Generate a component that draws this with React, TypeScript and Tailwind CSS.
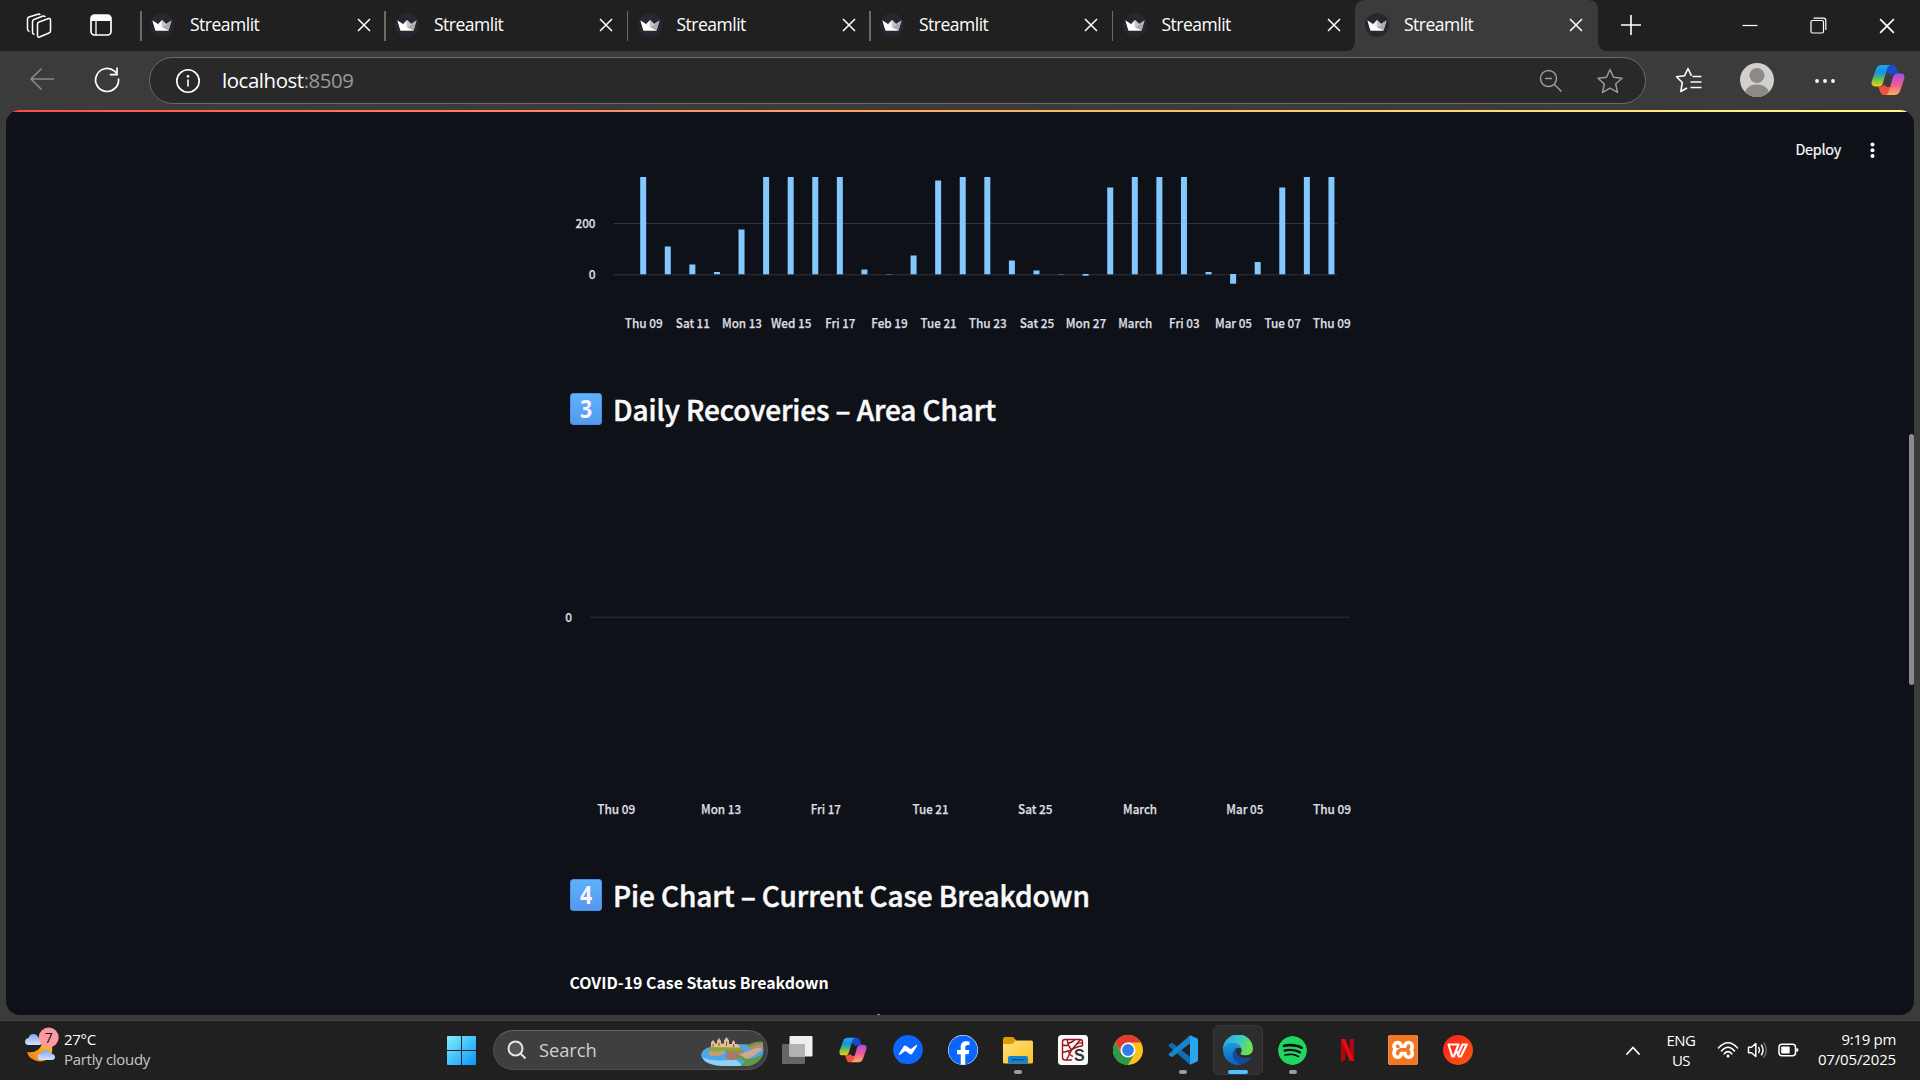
import React from "react";
import { BsMessenger } from "react-icons/bs";
import { FaFacebook } from "react-icons/fa";
import { SiSpotify, SiXampp } from "react-icons/si";

const ui = "font-['Open_Sans','Noto_Sans',sans-serif]";
const src = "font-['Noto_Sans_CJK_SC',sans-serif]";

function Crown() {
  return (
    <svg width="26" height="26" viewBox="0 0 26 26" className="shrink-0">
      <circle cx="13" cy="13" r="12" fill="#262730" />
      <path d="M3.500 8.500 L9 12 L13 8 L17 12 L22.500 8.500 L19.500 18.500 H6.500 Z" fill="#f0f0f0" />
      <path d="M13 8 L17 12 L13 15.500 Z" fill="#c4c4c4" />
      <path d="M22.500 8.500 L19.500 18.500 L13 15.500 Z" fill="#ababab" />
      <path d="M3.500 8.500 L13 15.500 L19.500 18.500 H6.500 Z" fill="#ffffff" />
    </svg>
  );
}

function Cross({ size }: { size: number }) {
  return (
    <svg width={size} height={size} viewBox="0 0 14 14" className="shrink-0" fill="none" stroke="#fff" strokeWidth="1.5">
      <path d="M1 1 L13 13 M13 1 L1 13" />
    </svg>
  );
}

function Tab({ active, first }: { active?: boolean; first?: boolean }) {
  return (
    <div className={`relative flex h-[50px] shrink-0 items-center ${first ? "w-[244px]" : "w-[242.5px]"}`}>
      {active ? (
        <svg className="absolute -left-[8px] top-0" width="262" height="51" viewBox="0 0 262 51">
          <path d="M0 51 Q9 51 9 41 V10 Q9 0 19 0 H242 Q252 0 252 10 V41 Q252 51 262 51 Z" fill="#3b3b3b" />
        </svg>
      ) : (
        <div className="absolute left-0 top-[11px] h-[30px] w-[1.5px] bg-[#6a6a6a]" />
      )}
      <div className={`relative flex w-full items-center ${first ? "pl-[9px]" : "pl-[10px]"}`}>
        <Crown />
        <span
          className={`${ui} -mt-[2px] text-[17.5px] leading-[24px] tracking-[-0.5px] text-white ${
            first ? "ml-[15px] w-[167px]" : "ml-[14px] w-[165px]"
          }`}
        >
          Streamlit
        </span>
        <Cross size={14} />
      </div>
    </div>
  );
}

function TabBar() {
  return (
    <div className="flex h-[51px] items-center bg-[#202020]">
      <svg className="ml-[26px] shrink-0" width="26" height="26" viewBox="0 0 26 26" fill="none" stroke="#fff" strokeWidth="1.5" strokeLinejoin="round">
        <path d="M11.500 11 Q11.500 9.500 13 9 L22.500 5.500 Q24.500 5 24.500 7 V18 Q24.500 19.500 23 20 L13.500 24 Q11.500 24.700 11.500 22.500 Z" />
        <path d="M8.500 21.500 Q6.500 21 6.500 19.500 V8.500 Q6.500 7 8 6.500 L17 3 Q18.800 2.600 19.300 4" />
        <path d="M3.500 18.500 Q1.500 18 1.500 16 V6 Q1.500 4.500 3 4 L12 1.200 Q13.500 .8 14.200 2" />
      </svg>
      <svg className="-mt-[1px] ml-[37px] shrink-0" width="24" height="24" viewBox="0 0 24 24">
        <rect x="2" y="2" width="20" height="20" rx="3.500" fill="none" stroke="#fff" strokeWidth="1.700" />
        <path d="M2 8 V5 Q2 2 5 2 H19 Q22 2 22 5 V8 Z" fill="#fff" />
        <path d="M7 8 V22" stroke="#fff" strokeWidth="1.300" />
      </svg>
      <div className="ml-[27px] flex self-start">
        {[0, 1, 2, 3, 4].map((i) => (
          <Tab key={i} first={i === 0} />
        ))}
        <Tab active />
      </div>
      <svg className="-mt-[1px] ml-[23px] shrink-0" width="22" height="22" viewBox="0 0 22 22" stroke="#fff" strokeWidth="1.600">
        <path d="M1 11 H21 M11 1 V21" />
      </svg>
      <div className="ml-auto flex items-center pr-[25px]">
        <svg width="16" height="16" viewBox="0 0 16 16" stroke="#fff" strokeWidth="1.200">
          <path d="M0.500 7.500 H15.500" />
        </svg>
        <svg className="ml-[52px]" width="17" height="17" viewBox="0 0 17 17" fill="none" stroke="#fff" strokeWidth="1.200">
          <rect x="1" y="3.500" width="12.500" height="12.500" rx="1.500" />
          <path d="M3.500 1.200 H13.500 Q15.800 1.200 15.800 3.500 V13" />
        </svg>
        <div className="ml-[52px]">
          <Cross size={16} />
        </div>
      </div>
    </div>
  );
}

function Copilot({ size, id }: { size: number; id: string }) {
  return (
    <svg width={size} height={size} viewBox="0 0 34 34" className="shrink-0">
      <defs>
        <linearGradient id={id + "a"} x1="0" y1="0" x2="0" y2="1">
          <stop offset="0" stopColor="#1fa7ee" />
          <stop offset=".35" stopColor="#1b90e0" />
          <stop offset=".65" stopColor="#5cc05a" />
          <stop offset="1" stopColor="#f7cf0e" />
        </linearGradient>
        <linearGradient id={id + "b"} x1="0" y1="0" x2="0" y2="1">
          <stop offset="0" stopColor="#a24df0" />
          <stop offset=".5" stopColor="#ee5a94" />
          <stop offset="1" stopColor="#fcae5c" />
        </linearGradient>
      </defs>
      <path d="M16.500 2 H21.500 Q24.500 2 25.500 5.500 L27 10.500 H24 Q21 10.500 20 12.500 L18 9.500 H14 Z" fill="#174cd0" />
      <path d="M17 32 H13 Q10 32 9 28.500 L7.500 23.500 H10 Q12.500 23.500 13.500 21.500 L15.500 24 H20 Z" fill="#f0523f" />
      <path d="M10.500 2 H19.500 Q17 2.500 16 6 L12 20 Q11 23.500 7.500 23.500 H4.500 Q-.5 23.500 .8 18 L5 6 Q6.500 2 10.500 2 Z" fill={"url(#" + id + "a)"} />
      <path d="M23.500 32 H14.500 Q17 31.500 18 28 L22 14 Q23 10.500 26.500 10.500 H29.500 Q34.500 10.500 33.200 16 L29 28 Q27.500 32 23.500 32 Z" fill={"url(#" + id + "b)"} />
    </svg>
  );
}

function Toolbar() {
  return (
    <div className="flex h-[59px] items-center bg-[#3b3b3b]">
      <svg className="-mt-[3px] ml-[29px] shrink-0" width="26" height="26" viewBox="0 0 26 26" fill="none" stroke="#8a8a8a" strokeWidth="1.500">
        <path d="M25 13 H2 M12.500 2.500 L2 13 L12.500 23.500" />
      </svg>
      <svg className="-mt-[2px] ml-[38px] shrink-0" width="28" height="28" viewBox="0 0 28 28" fill="none" stroke="#fff" strokeWidth="1.700">
        <path d="M25.500 12.500 A11.500 11.500 0 1 1 21.500 5.200 L23.800 7.500" />
        <path d="M24 1.500 V8.700 H16.800" />
      </svg>
      <div className="ml-[28px] flex h-[47px] w-[1497px] shrink-0 items-center rounded-full border-[1.5px] border-[#6b6b6b] bg-[#292929]">
        <svg className="ml-[25px] shrink-0" width="26" height="26" viewBox="0 0 26 26" fill="none" stroke="#fff" strokeWidth="1.600">
          <circle cx="13" cy="13" r="11.200" />
          <path d="M13 11.500 V18.500" />
          <circle cx="13" cy="8.300" r=".6" fill="#fff" />
        </svg>
        <span className={`${ui} -mt-[1px] ml-[21px] text-[20.4px] leading-[28px] tracking-[-0.42px] text-white`}>
          localhost<span className="text-[#9a9a9a]">:8509</span>
        </span>
        <svg className="ml-auto shrink-0" width="24" height="24" viewBox="0 0 24 24" fill="none" stroke="#9a9a9a" strokeWidth="1.500">
          <circle cx="9.500" cy="9.500" r="8" />
          <path d="M15.200 15.200 L22.500 22.500 M6 9.500 H13" />
        </svg>
        <svg className="ml-[34px] mr-[22px] shrink-0" width="26" height="26" viewBox="0 0 26 26" fill="none" stroke="#9a9a9a" strokeWidth="1.500" strokeLinejoin="round">
          <path d="M13 1.500 L16.500 9.300 L25 10.200 L18.700 16 L20.500 24.300 L13 20.100 L5.500 24.300 L7.300 16 L1 10.200 L9.500 9.300 Z" />
        </svg>
      </div>
      <svg className="-mt-[1px] ml-[29px] shrink-0" width="28" height="28" viewBox="0 0 28 28" fill="none" stroke="#fff" strokeWidth="1.600" strokeLinejoin="round">
        <path d="M16.500 9.800 L13 2.500 L9.500 9.800 L1.500 10.800 L7.300 16.500 L5.800 25.500 L12 22" />
        <path d="M17.500 10.500 H26.500 M15.500 16 H26.500 M15.500 21.500 H26.500" />
      </svg>
      <svg className="-mt-[1px] ml-[37px] shrink-0" width="34" height="34" viewBox="0 0 34 34">
        <defs>
          <clipPath id="avatar">
            <circle cx="17" cy="17" r="17" />
          </clipPath>
        </defs>
        <g clipPath="url(#avatar)">
          <rect width="34" height="34" fill="#d2d0ce" />
          <circle cx="17" cy="12.500" r="7.500" fill="#8d8985" />
          <path d="M4 34 Q5 21.500 17 21.500 Q29 21.500 30 34 Z" fill="#8d8985" />
        </g>
      </svg>
      <svg className="ml-[40px] shrink-0" width="22" height="6" viewBox="0 0 22 6" fill="#fff">
        <circle cx="3" cy="3" r="1.900" />
        <circle cx="11" cy="3" r="1.900" />
        <circle cx="19" cy="3" r="1.900" />
      </svg>
      <div className="-mt-[1px] ml-[35px]">
        <Copilot size={34} id="cpt" />
      </div>
    </div>
  );
}

const BAR_TOPS = [
  170, 246.5, 264.5, 272, 229.5, 170, 170, 170, 170, 269.5, 274, 255.5, 180.5, 170, 170, 260.5, 270.500,
  274, 276, 187.5, 170, 170, 170, 272, 284, 262, 187.5, 170, 170,
];
const BAR_LABELS = [
  "Thu 09", "Sat 11", "Mon 13", "Wed 15", "Fri 17", "Feb 19", "Tue 21", "Thu 23", "Sat 25", "Mon 27", "March",
  "Fri 03", "Mar 05", "Tue 07", "Thu 09",
];
const LABEL_WIDTHS: Record<string, number> = {
  "Thu 09": 38, "Sat 11": 34, "Mon 13": 40, "Wed 15": 40.500, "Fri 17": 30, "Feb 19": 36.500, "Tue 21": 36,
  "Thu 23": 38, "Sat 25": 34.500, "Mon 27": 40.500, March: 34, "Fri 03": 30.500, "Mar 05": 37, "Tue 07": 36.500,
};

const axisText = "[&_text]:[stroke:#dcdee2] [&_text]:[stroke-width:0.25px]";

function AxisLabel({ x, y, text }: { x: number; y: number; text: string }) {
  const w = LABEL_WIDTHS[text];
  return (
    <text x={x - w / 2} y={y} textLength={w} lengthAdjust="spacingAndGlyphs">
      {text}
    </text>
  );
}

function BarChart() {
  return (
    <svg width="792" height="163" viewBox="560 177 792 163" className={`${src} ${axisText} block text-[12.4px] font-medium`} fill="#dcdee2">
      <rect x="613.500" y="223" width="724" height="1" fill="#31333b" />
      <rect x="613.500" y="274.300" width="724" height="1" fill="#31333b" />
      {BAR_TOPS.map((t, i) => {
        const x = 640.200 + i * 24.580;
        return <rect key={i} x={x} y={Math.min(t, 274)} width="6" height={Math.abs(274.300 - t)} fill="#83c9ff" />;
      })}
      <text x="575.500" y="228" textLength="20" lengthAdjust="spacingAndGlyphs">200</text>
      <text x="588.800" y="279" textLength="6.800" lengthAdjust="spacingAndGlyphs">0</text>
      {BAR_LABELS.map((l, i) => (
        <AxisLabel key={i} x={643.700 + i * 49.150} y={328} text={l} />
      ))}
    </svg>
  );
}

function AreaChart() {
  return (
    <svg width="792" height="250" viewBox="560 580 792 250" className={`${src} ${axisText} mt-[130px] block text-[12.4px] font-medium`} fill="#dcdee2">
      <rect x="590" y="616.500" width="760" height="1.500" fill="#25272f" />
      <text x="565.300" y="622" textLength="6.800" lengthAdjust="spacingAndGlyphs">0</text>
      {["Thu 09", "Mon 13", "Fri 17", "Tue 21", "Sat 25", "March", "Mar 05"].map((l, i) => (
        <AxisLabel key={i} x={616.300 + i * 104.750} y={814} text={l} />
      ))}
      <AxisLabel x={1332} y={814} text="Thu 09" />
    </svg>
  );
}

function Keycap({ n }: { n: string }) {
  return (
    <span className="flex h-[32px] w-[32px] items-center justify-center rounded-[3px] border border-[#4a8fea] bg-linear-to-b from-[#5eb1fb] to-[#5599ee] font-['Noto_Sans',sans-serif] text-[25px] font-bold leading-none text-[#fdf4ff]">
      <span className="-mt-[1px] block scale-x-85">{n}</span>
    </span>
  );
}

function Heading({ n, text }: { n: string; text: string }) {
  return (
    <h3 className="ml-[10px] flex h-[40px] items-center gap-[11px]">
      <Keycap n={n} />
      <span className={`${src} whitespace-nowrap text-[28px] font-medium leading-[40px] tracking-[-0.11px] text-[#fafafa] [-webkit-text-stroke:0.5px_#fafafa]`}>
        {text}
      </span>
    </h3>
  );
}

function Page() {
  return (
    <div className="relative mx-[6px] flex h-[905px] flex-col overflow-hidden rounded-[14px] bg-[#0e1117]">
      <div className="h-[2px] shrink-0 bg-linear-to-r from-[#ff4b4b] to-[#fffd80]" />
      <div className="flex h-[65px] shrink-0 items-start justify-end pr-[38px] pt-[25px]">
        <span className={`${src} text-[14.4px] leading-[24px] tracking-[-0.25px] text-[#fafafa] [-webkit-text-stroke:0.2px_#fafafa]`}>Deploy</span>
        <svg className="ml-[28px] mt-[4px]" width="7" height="18" viewBox="0 0 7 18" fill="#fafafa">
          <circle cx="3.500" cy="3.500" r="2" />
          <circle cx="3.500" cy="9.300" r="2" />
          <circle cx="3.500" cy="15" r="2" />
        </svg>
      </div>
      <div className="ml-[554px] flex w-[792px] flex-col">
        <BarChart />
        <div className="h-[49px]" />
        <Heading n="3" text="Daily Recoveries – Area Chart" />
        <div className="h-[21px]" />
        <AreaChart />
        <div className="h-[45px]" />
        <Heading n="4" text="Pie Chart – Current Case Breakdown" />
        <div className={`${src} ml-[9.5px] mt-[56px] whitespace-nowrap text-[15.9px] font-bold leading-[24px] text-white`}>
          COVID-19 Case Status Breakdown
        </div>
        <div className="ml-[317px] mt-[19px] h-[2px] w-[3px] bg-[#8a8c90]" />
      </div>
      <div className="absolute right-[0px] top-[324px] h-[251px] w-[5px] rounded-full bg-[#8b8b8b]" />
    </div>
  );
}

function Weather() {
  return (
    <svg width="36" height="36" viewBox="24 1027 36 36" className="shrink-0">
      <defs>
        <linearGradient id="cloud" x1="0" y1="0" x2="0" y2="1">
          <stop offset="0" stopColor="#7fa6ea" />
          <stop offset="1" stopColor="#d5e3fb" />
        </linearGradient>
        <linearGradient id="moon" x1="1" y1="0" x2="0" y2="1">
          <stop offset="0" stopColor="#fbc02d" />
          <stop offset="1" stopColor="#ee7a12" />
        </linearGradient>
      </defs>
      <path d="M27 1052 Q38 1054 42 1044 L52 1046 Q54 1061 39 1061.500 Q29 1060 27 1052 Z" fill="url(#moon)" />
      <path d="M29 1045 Q25 1045 25 1041.500 Q25.500 1038 28.500 1038 Q30 1033.500 34 1034 Q37.500 1034.500 38.500 1038 Q42 1039 42 1042 Q42 1045 39 1045 Z" fill="url(#cloud)" />
      <path d="M41 1060 Q37 1060 37.500 1056.500 Q38 1053.500 41 1053.500 Q42.500 1049.500 46.500 1050 Q50 1050.500 51 1053.500 Q55 1054 55 1057 Q55 1060 51.500 1060 Z" fill="url(#cloud)" />
      <circle cx="48.700" cy="1037.500" r="10" fill="#fe99a4" />
      <text x="48.700" y="1042.800" textAnchor="middle" className={`${ui} text-[14px]`} fill="#111">7</text>
    </svg>
  );
}

function Castle() {
  return (
    <svg width="64" height="30" viewBox="701 1038 64 30" className="shrink-0">
      <path d="M701 1056 Q702 1050 710 1048 Q725 1044 763 1046 Q764 1052 762.500 1057 Q758 1065 748 1067 H722 Q703 1066 701 1056 Z" fill="#4aa8ea" />
      <path d="M702 1058 Q714 1064 735 1060 L743 1067 H722 Q706 1066 702 1058 Z" fill="#8fd3fa" />
      <path d="M747 1047 Q755 1042 763 1043 V1050 Q755 1051 747 1049 Z" fill="#a98e74" />
      <path d="M747 1047 Q755 1042 763 1043 V1045 Q756 1044 750 1048 Z" fill="#6f9a3a" />
      <path d="M709 1051 H724 V1055 Q716 1059 709 1056 Z" fill="#c79a7d" />
      <path d="M726 1051 H744 L741 1059 Q733 1063 726 1060 Z" fill="#a87c6a" />
      <path d="M738 1056 L757 1048.500 L763 1050 L752 1058 L744 1061 Z" fill="#cfa98d" />
      <path d="M709 1050.500 Q712 1046.500 722 1047.500 L742 1048.500 Q743 1052.500 736 1052 L724 1051 Q716 1054 709 1052 Z" fill="#86aa2e" />
      <path d="M735 1055 Q742 1056 746 1060 Q756 1060 763 1054 Q760 1065 748 1067 H740 L745 1062.500 Q737 1060 735 1055 Z" fill="#5f9a45" />
      <path d="M711 1048 V1043.500 L713 1041 L715 1043.500 V1044.500 H717 V1042 L719 1039 L721 1042 V1044.500 H724 V1041.500 L726.500 1038 L729 1041.500 V1045 H732 V1043 L733.500 1041 L735 1043 V1045 H738 L740 1048.500 Z" fill="#e6bd9c" />
      <path d="M713 1045 V1047.500 M719 1043.500 V1047 M726.500 1042.500 V1047 M733.500 1045 V1048" stroke="#8a5d48" strokeWidth="1.100" />
    </svg>
  );
}

function TaskView() {
  return (
    <svg width="31" height="30" viewBox="0 0 31 30">
      <rect x="0" y="9" width="23" height="20" rx="1" fill="#666" />
      <rect x="7.500" y="1" width="23" height="20.500" rx="1" fill="#efefef" />
      <path d="M7.500 9 H23 V21.500 H8.500 Q7.500 21.500 7.500 20.500 Z" fill="#b3b3b3" />
    </svg>
  );
}

function Folder() {
  return (
    <svg width="30" height="30" viewBox="0 0 30 30">
      <defs>
        <linearGradient id="fold" x1="0" y1="0" x2="1" y2="1">
          <stop offset="0" stopColor="#ffe07a" />
          <stop offset="1" stopColor="#fcc123" />
        </linearGradient>
      </defs>
      <path d="M0 4 Q0 2 2 2 H10 L13 5 V9 H0 Z" fill="#dd9b06" />
      <path d="M0 9 H8.500 Q10 9 11 7.500 L12.500 5.500 H28 Q30 5.500 30 7 V27 Q30 28.500 28.500 28.500 H1.500 Q0 28.500 0 27 Z" fill="url(#fold)" />
      <path d="M5 28.500 V23 Q5 21 7 21 H23 Q25 21 25 23 V28.500 Z" fill="#1583cf" />
      <rect x="8.500" y="24" width="13" height="1.300" fill="#0b4f92" />
    </svg>
  );
}

function Spyder() {
  return (
    <svg width="30" height="30" viewBox="0 0 30 30">
      <rect width="30" height="30" rx="3.500" fill="#fafafa" />
      <g fill="none" stroke="#9c1620" strokeWidth="1.400">
        <path d="M14 25 H7 Q4.500 25 4.500 22.500 V7 Q4.500 4.500 7 4.500 H22 Q24.500 4.500 24.500 7 V11" />
        <path d="M9 4.500 Q10 11 13.500 15 L8.500 25 M13.500 15 L4.500 17.500 M13.500 15 L22.500 4.500 M13.500 15 Q19 11 24.500 11 M9.800 8.500 Q15 7 17 4.500 M4.500 10 Q8 11 10.500 10 M10.500 16 Q11 20 15 21.500 M18.500 9.500 Q20.500 7.500 24.500 8" />
      </g>
      <text x="16" y="25.500" className="font-['Liberation_Sans',sans-serif] text-[16px] font-bold" fill="#333">S</text>
    </svg>
  );
}

function Chrome() {
  return (
    <svg width="30" height="30" viewBox="0 0 30 30">
      <circle cx="15" cy="15" r="15" fill="#fcc21b" />
      <path d="M2 7.500 A15 15 0 0 1 28 7.500 H15 L9 18.500 Z" fill="#e33b2e" />
      <path d="M2 7.500 A15 15 0 0 0 15 30 L21.500 18.700 L15 22 L8.500 18.700 Z" fill="#2b9a48" />
      <circle cx="15" cy="15" r="7.500" fill="#fff" />
      <circle cx="15" cy="15" r="5.900" fill="#2f7de9" />
    </svg>
  );
}

function VsCode() {
  return (
    <svg width="30" height="30" viewBox="0 0 30 30">
      <path d="M1 9.800 L3 8.200 Q3.800 7.800 4.600 8.300 L22 21.500 V29.700 L.9 11.300 Q.3 10.500 1 9.800 Z" fill="#0f6db3" />
      <path d="M1 20.200 L3 21.800 Q3.800 22.200 4.600 21.700 L22 8.500 V.3 L.9 18.700 Q.3 19.500 1 20.200 Z" fill="#1785ca" />
      <path d="M22 .2 L29 3.300 Q30 3.800 30 5 V25 Q30 26.200 29 26.700 L22 29.800 Z" fill="#2ba4f0" />
    </svg>
  );
}

function Edge() {
  return (
    <svg width="30" height="30" viewBox="0 0 30 30">
      <defs>
        <linearGradient id="ea" x1="0" y1="0" x2="1" y2=".3">
          <stop offset="0" stopColor="#2ba6e8" />
          <stop offset=".5" stopColor="#33c4d8" />
          <stop offset="1" stopColor="#6fe052" />
        </linearGradient>
        <linearGradient id="eb" x1="0" y1="0" x2="0" y2="1">
          <stop offset="0" stopColor="#1a9be0" />
          <stop offset="1" stopColor="#0d62b8" />
        </linearGradient>
      </defs>
      <path d="M0 15 A15 15 0 0 1 30 13.500 Q30 20 23 20.300 Q17.500 20.300 17.500 18.500 Q19.500 16 18 13 Q15 8 9 8 Q2.500 8.500 0 15 Z" fill="url(#ea)" />
      <path d="M0 15 Q1.500 8 9 7.500 Q16.500 7.500 18.500 13.500 Q14 11.500 11.500 15 Q8.500 20 12.500 25 Q15 28 19 29.300 Q13 31 8 28.200 Q0 23.500 0 15 Z" fill="url(#eb)" />
      <path d="M11.800 14.500 Q7 21 12.500 26 Q17 30 21.500 28.500 Q26 26.500 28.300 22.500 Q28.500 21.500 27.500 22 Q22 24.500 17 21.500 Q11.500 18.500 13 13.500 Z" fill="#104d96" />
    </svg>
  );
}

function Netflix() {
  return (
    <svg width="13" height="22" viewBox="0 0 13 22">
      <path d="M0 0 H4.300 V21.500 L0 22 Z M8.700 0 H13 V22 L8.700 21.500 Z" fill="#b1060f" />
      <path d="M0 0 H4.300 L13 22 L8.500 21.500 Z" fill="#e50914" />
    </svg>
  );
}

function Wps() {
  return (
    <svg width="30" height="30" viewBox="0 0 30 30">
      <defs>
        <linearGradient id="wps" x1="0" y1="0" x2="1" y2="1">
          <stop offset="0" stopColor="#fb1d1d" />
          <stop offset="1" stopColor="#ff5a10" />
        </linearGradient>
      </defs>
      <circle cx="15" cy="15" r="15" fill="url(#wps)" />
      <path d="M5.500 9.500 H15.500 L10.800 21.500 H9.300 Z M12.800 14.500 L15.800 21.500 H17.800 L23.800 9.500 H19.500 L15.500 18.500" fill="none" stroke="#fff" strokeWidth="2.100" strokeLinejoin="round" />
    </svg>
  );
}

function AppSlot({ children, mark }: { children: React.ReactNode; mark?: "open" | "active" }) {
  return (
    <div className="relative flex h-[50px] w-[55px] items-center justify-center">
      {mark === "active" && (
        <div className="absolute inset-y-0 left-[2.5px] w-[50px] rounded-[6px] border border-[#383838] bg-[#2d2d2d]" />
      )}
      <div className="relative">{children}</div>
      {mark === "active" && <div className="absolute bottom-[1px] left-[17.5px] h-[4px] w-[20px] rounded-full bg-[#4cc2ff]" />}
      {mark === "open" && <div className="absolute bottom-[1px] left-[23.5px] h-[4px] w-[8px] rounded-full bg-[#9b9b9b]" />}
    </div>
  );
}

function Tray() {
  return (
    <div className={`${ui} ml-auto flex h-[59px] items-center pr-[24px] text-[15px] leading-[20px] text-white`}>
      <svg width="16" height="11" viewBox="0 0 16 11" fill="none" stroke="#fff" strokeWidth="1.800" strokeLinecap="round">
        <path d="M2 9 L8 2.500 L14 9" />
      </svg>
      <div className="-mt-[2px] ml-[25px] w-[30px] text-center tracking-[-0.5px]">
        <div>ENG</div>
        <div>US</div>
      </div>
      <svg className="-mt-[2px] ml-[21px]" width="22" height="18" viewBox="0 0 22 18" fill="none" stroke="#fff" strokeWidth="1.600" strokeLinecap="round">
        <path d="M1.500 7 Q11 -3.500 20.500 7" />
        <path d="M4.500 10 Q11 2.500 17.500 10" />
        <path d="M7.200 12.800 Q11 8.500 14.800 12.800" />
        <circle cx="11" cy="15" r="1.500" fill="#fff" stroke="none" />
      </svg>
      <svg className="-mt-[2px] ml-[8px]" width="22" height="18" viewBox="0 0 22 18" fill="none" stroke="#fff" strokeWidth="1.500" strokeLinejoin="round" strokeLinecap="round">
        <path d="M1.500 6.300 H4.500 L8.800 2.500 V15.500 L4.500 11.700 H1.500 Z" />
        <path d="M11.800 6.500 Q13.200 9 11.800 11.500 M14.500 4.200 Q17.500 9 14.500 13.800" />
        <path d="M17 2 Q21.500 9 17 16" stroke="#6a6a6a" />
      </svg>
      <svg className="-mt-[1px] ml-[9px]" width="21" height="14" viewBox="0 0 21 14">
        <rect x="1" y="1.200" width="16.500" height="11.600" rx="3" fill="none" stroke="#fff" strokeWidth="1.500" />
        <rect x="3.200" y="3.500" width="8.500" height="7" rx="1" fill="#fff" />
        <path d="M18.300 5 Q20.500 5 20.500 7 Q20.500 9 18.300 9 Z" fill="#fff" />
      </svg>
      <div className="-mt-[4px] ml-[15px] w-[82px] whitespace-nowrap text-right">
        <div className="tracking-[-0.3px]">9:19 pm</div>
        <div className="tracking-[-0.15px]">07/05/2025</div>
      </div>
    </div>
  );
}

function Taskbar() {
  return (
    <div className="flex h-[59px] items-center bg-[#202020]">
      <div className="flex w-[447px] items-center">
        <div className="-mt-[12px] ml-[24px]">
          <Weather />
        </div>
        <div className={`${ui} -mt-[4px] ml-[4px] text-[15px] leading-[20px] tracking-[-0.3px]`}>
          <div className="text-white">27°C</div>
          <div className="text-[#c6c6c6]">Partly cloudy</div>
        </div>
      </div>
      <svg width="29" height="29" viewBox="0 0 29 29" className="shrink-0">
        <defs>
          <linearGradient id="win" gradientUnits="userSpaceOnUse" x1="0" y1="0" x2="29" y2="29">
            <stop offset="0" stopColor="#7ff0ff" />
            <stop offset="1" stopColor="#0a93fb" />
          </linearGradient>
        </defs>
        <path d="M0 1 Q0 0 1 0 H14 V14 H0 Z M15 0 H28 Q29 0 29 1 V14 H15 Z M0 15 H14 V29 H1 Q0 29 0 28 Z M15 15 H29 V28 Q29 29 28 29 H15 Z" fill="url(#win)" />
      </svg>
      <div className="-mt-[1px] ml-[17px] flex h-[40px] w-[275px] shrink-0 items-center rounded-full border border-[#505050] border-t-[#636363] bg-[#3f3f3f]">
        <svg className="ml-[13px] shrink-0" width="20" height="20" viewBox="0 0 20 20" fill="#565656" stroke="#e6e6e6" strokeWidth="2">
          <circle cx="8.500" cy="8.500" r="7" />
          <path d="M13.500 13.500 L18.500 18.500" />
        </svg>
        <span className={`${ui} ml-[12px] text-[18.4px] leading-[26px] tracking-[-0.1px] text-[#cfcfcf]`}>Search</span>
        <div className="ml-auto mr-[2px] mt-[4px]">
          <Castle />
        </div>
      </div>
      <div className="-mt-[1px] ml-[2px] flex items-center">
        <AppSlot><TaskView /></AppSlot>
        <AppSlot><Copilot size={28} id="cpb" /></AppSlot>
        <AppSlot><BsMessenger size={30} color="#0a66ff" className="rounded-full bg-[radial-gradient(circle,white_55%,transparent_56%)]" /></AppSlot>
        <AppSlot><FaFacebook size={30} color="#0a66ff" className="rounded-full bg-white" /></AppSlot>
        <AppSlot mark="open"><Folder /></AppSlot>
        <AppSlot><Spyder /></AppSlot>
        <AppSlot><Chrome /></AppSlot>
        <AppSlot mark="open"><VsCode /></AppSlot>
        <AppSlot mark="active"><Edge /></AppSlot>
        <AppSlot mark="open"><SiSpotify size={29} color="#1ed760" className="rounded-full bg-[#101010]" /></AppSlot>
        <AppSlot><Netflix /></AppSlot>
        <AppSlot><SiXampp size={30} color="#f37623" className="rounded-[3px] bg-white" /></AppSlot>
        <AppSlot><Wps /></AppSlot>
      </div>
      <Tray />
    </div>
  );
}

export default function App() {
  return (
    <div className="flex h-[1080px] w-[1920px] flex-col overflow-hidden bg-[#3b3b3b]">
      <TabBar />
      <Toolbar />
      <Page />
      <div className="h-[6px] shrink-0 border-b border-[#464646]" />
      <Taskbar />
    </div>
  );
}
